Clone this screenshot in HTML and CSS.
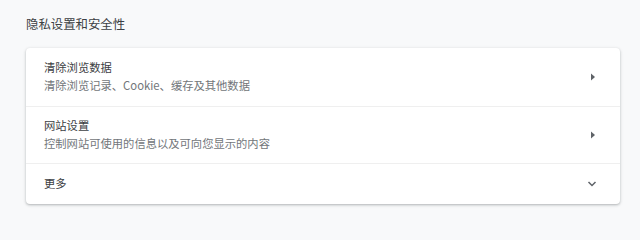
FILE: index.html
```html
<!DOCTYPE html>
<html lang="zh-CN">
<head>
<meta charset="utf-8">
<link rel="stylesheet" href="styles.css">
</head>
<body>
<div class="page">
  <h2 class="section-title">隐私设置和安全性</h2>
  <div class="card">
    <div class="row two-line">
      <div class="text">
        <div class="primary">清除浏览数据</div>
        <div class="secondary">清除浏览记录、Cookie、缓存及其他数据</div>
      </div>
      <svg class="icon" width="10" height="10" viewBox="0 0 10 10"><path d="M3 1.5 L7 5 L3 8.5 Z" fill="#5f6368"/></svg>
    </div>
    <div class="row two-line">
      <div class="text">
        <div class="primary">网站设置</div>
        <div class="secondary">控制网站可使用的信息以及可向您显示的内容</div>
      </div>
      <svg class="icon" width="10" height="10" viewBox="0 0 10 10"><path d="M3 1.5 L7 5 L3 8.5 Z" fill="#5f6368"/></svg>
    </div>
    <div class="row one-line">
      <div class="text">
        <div class="primary">更多</div>
      </div>
      <svg class="icon" width="12" height="10" viewBox="0 0 12 10"><path d="M2.5 3 L6 6.5 L9.5 3" fill="none" stroke="#5f6368" stroke-width="1.5"/></svg>
    </div>
  </div>
</div>
</body>
</html>
```
FILE: styles.css
```css
html, body {
  margin: 0;
  padding: 0;
  background: #f8f9fa;
}
body {
  font-family: "Noto Sans CJK SC", "Noto Sans", Roboto, sans-serif;
  width: 640px;
  height: 221px;
  overflow: hidden;
}
.page {
  padding: 16px 20px 0 26px;
}
.section-title {
  margin: 0 0 16px 0;
  font-size: 12.4px;
  font-weight: 400;
  line-height: 16px;
  color: #3c4043;
}
.card {
  background: #fff;
  border-radius: 4px;
  box-shadow: 0 1px 2px rgba(60, 64, 67, 0.25), 0 1px 3px 1px rgba(60, 64, 67, 0.1);
}
.row {
  box-sizing: border-box;
  display: flex;
  align-items: center;
  padding: 0 22px 0 18px;
  border-top: 1px solid #efefef;
}
.row:first-child {
  border-top: none;
}
.two-line {
  height: 57px;
}
.row:first-child.two-line {
  height: 58px;
}
.one-line {
  height: 41px;
}
.text {
  flex: 1;
  padding-bottom: 2px;
}
.primary {
  font-size: 11.3px;
  line-height: 18px;
  color: #3c4043;
}
.secondary {
  font-size: 11.3px;
  line-height: 18px;
  color: #72767a;
}
.icon {
  flex: none;
}
```
